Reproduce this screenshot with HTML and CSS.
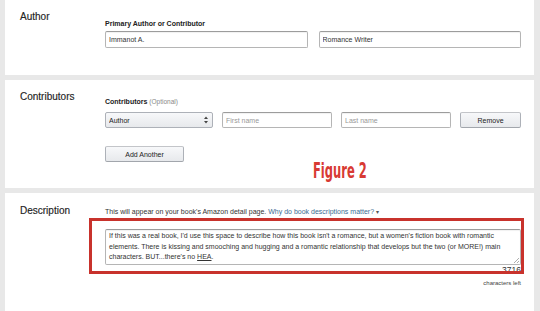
FILE: index.html
```html
<!DOCTYPE html>
<html lang="en">
<head>
    <meta charset="UTF-8">
    <meta name="viewport" content="width=device-width, initial-scale=1.0">
    <title>Book Details</title>
    <link rel="stylesheet" href="styles.css">
</head>
<body>
    <div class="page">
        <!-- Author -->
        <section class="panel panel-author">
            <h2 class="panel-title">Author</h2>
            <div class="panel-body">
                <div class="field-label">Primary Author or Contributor</div>
                <div class="input-row">
                    <input class="text-input" type="text" value="Immanot A.">
                    <input class="text-input" type="text" value="Romance Writer">
                </div>
            </div>
        </section>

        <!-- Contributors -->
        <section class="panel panel-contributors">
            <h2 class="panel-title">Contributors</h2>
            <div class="panel-body">
                <div class="field-label">Contributors <span class="optional">(Optional)</span></div>
                <div class="contrib-row">
                    <div class="select-wrap">
                        <select class="select">
                            <option>Author</option>
                        </select>
                        <svg class="select-arrows" viewBox="0 0 4 8" width="4" height="8">
                            <path d="M0,3 L2,0.5 L4,3 Z M0,5 L2,7.5 L4,5 Z" fill="#444"/>
                        </svg>
                    </div>
                    <input class="text-input name-input" type="text" placeholder="First name">
                    <input class="text-input name-input" type="text" placeholder="Last name">
                    <button class="btn btn-remove">Remove</button>
                </div>
                <button class="btn btn-add">Add Another</button>
            </div>
            <div class="figure-note">Figure 2</div>
        </section>

        <!-- Description -->
        <section class="panel panel-description">
            <h2 class="panel-title">Description</h2>
            <div class="panel-body">
                <div class="desc-help">This will appear on your book's Amazon detail page. <a href="#" class="help-link">Why do book descriptions matter?</a> <span class="caret">&#9662;</span></div>
                <div class="textarea">
                    If this was a real book, I'd use this space to describe how this book isn't a romance, but a women's fiction book with romantic<br>
                    elements. There is kissing and smooching and hugging and a romantic relationship that develops but the two (or MORE!) main<br>
                    characters. BUT...there's no <span class="spell">HEA</span>.
                    <svg class="grip" viewBox="0 0 6 6" width="6" height="6">
                        <path d="M6,1 L1,6 M6,4 L4,6" stroke="#999" stroke-width="0.8"/>
                    </svg>
                </div>
                <div class="char-count">3716</div>
                <div class="char-left">characters left</div>
            </div>
            <div class="highlight-box"></div>
        </section>
    </div>
</body>
</html>
```

FILE: styles.css
```css
/* Reset and Base Styles */
* {
    margin: 0;
    padding: 0;
    box-sizing: border-box;
}

body {
    font-family: "Liberation Sans", Arial, sans-serif;
    color: #333;
    background-color: #e8e8e8;
    height: 311px;
    overflow: hidden;
}

/* Page */
.page {
    display: flex;
    flex-direction: column;
    gap: 5px;
    padding: 0 6px 0 5px;
}

/* Panels */
.panel {
    position: relative;
    display: grid;
    grid-template-columns: 85px 1fr;
    background-color: #fff;
    padding: 11px 13px 27px 15px;
}

.panel-contributors {
    padding-bottom: 26px;
}

.panel-description {
    padding-top: 12px;
    padding-bottom: 26px;
}

.panel-title {
    font-size: 10px;
    line-height: 12px;
    font-weight: normal;
    color: #222;
    -webkit-text-stroke: 0.15px #222;
}

.field-label {
    font-size: 7px;
    line-height: 9px;
    font-weight: bold;
    color: #222;
    margin-top: 8px;
}

.panel-contributors .field-label {
    margin-top: 6px;
}

.optional {
    font-weight: normal;
    color: #888;
    font-size: 6.5px;
}

/* Inputs */
.input-row {
    display: flex;
    gap: 11px;
    margin-top: 3px;
}

.text-input {
    flex: 1;
    height: 17px;
    border: 1px solid #b5b5b5;
    border-top-color: #9c9c9c;
    border-radius: 2px;
    box-shadow: inset 0 1px 1px rgba(0, 0, 0, 0.06);
    padding: 0 3px;
    font-family: inherit;
    font-size: 7px;
    color: #333;
    outline: none;
}

.text-input::placeholder {
    color: #999;
}

.contrib-row {
    display: flex;
    justify-content: space-between;
    align-items: flex-start;
    margin-top: 6px;
}

.contrib-row .text-input {
    flex: none;
    width: 110px;
    height: 16px;
}

.select-wrap {
    position: relative;
    width: 108px;
    height: 16px;
}

.select {
    display: block;
    appearance: none;
    -webkit-appearance: none;
    width: 100%;
    height: 16px;
    border: 1px solid #adb1b8;
    border-radius: 2px;
    background: linear-gradient(#f7f8fa, #e7e9ec);
    padding: 0 3px;
    font-family: inherit;
    font-size: 7px;
    color: #222;
}

.select-arrows {
    position: absolute;
    right: 5px;
    top: 4px;
}

/* Buttons */
.btn {
    display: block;
    height: 16px;
    border: 1px solid #adb1b8;
    border-color: #c3c5c9 #adb1b8 #a2a6ac;
    border-radius: 2px;
    background: linear-gradient(#f7f8fa, #e7e9ec);
    font-family: inherit;
    font-size: 7px;
    color: #222;
    cursor: pointer;
}

.btn-remove {
    width: 61px;
}

.btn-add {
    width: 79px;
    margin-top: 18px;
}

/* Figure label */
.figure-note {
    position: absolute;
    left: 308px;
    top: 80px;
    font-family: "Liberation Sans Narrow", "DejaVu Sans Condensed", sans-serif;
    font-stretch: condensed;
    font-weight: bold;
    font-size: 16px;
    line-height: 16px;
    color: #d83a33;
    transform: scale(0.8, 1.37);
    transform-origin: top left;
}

/* Description */
.desc-help {
    font-size: 7px;
    line-height: 9px;
    margin-top: 2px;
    color: #333;
}

.help-link {
    color: #3a6d92;
    text-decoration: none;
}

.caret {
    font-size: 6px;
    color: #555;
}

.textarea {
    position: relative;
    height: 36px;
    margin-top: 12px;
    border: 1px solid #b5b5b5;
    border-top-color: #9c9c9c;
    border-radius: 2px;
    box-shadow: inset 0 1px 1px rgba(0, 0, 0, 0.06);
    padding: 1px 3px;
    font-size: 7px;
    line-height: 10.5px;
    color: #333;
    white-space: nowrap;
    overflow: hidden;
}

.spell {
    text-decoration: underline;
}

.grip {
    position: absolute;
    right: 1px;
    bottom: 1px;
}

.char-count {
    text-align: right;
    font-size: 8.5px;
    line-height: 10px;
    color: #333;
}

.char-left {
    text-align: right;
    font-size: 6px;
    line-height: 8px;
    margin-top: 4px;
    color: #444;
}

.highlight-box {
    position: absolute;
    left: 84px;
    top: 25px;
    width: 435px;
    height: 56px;
    border: 3px solid #c8322c;
    pointer-events: none;
}
```
